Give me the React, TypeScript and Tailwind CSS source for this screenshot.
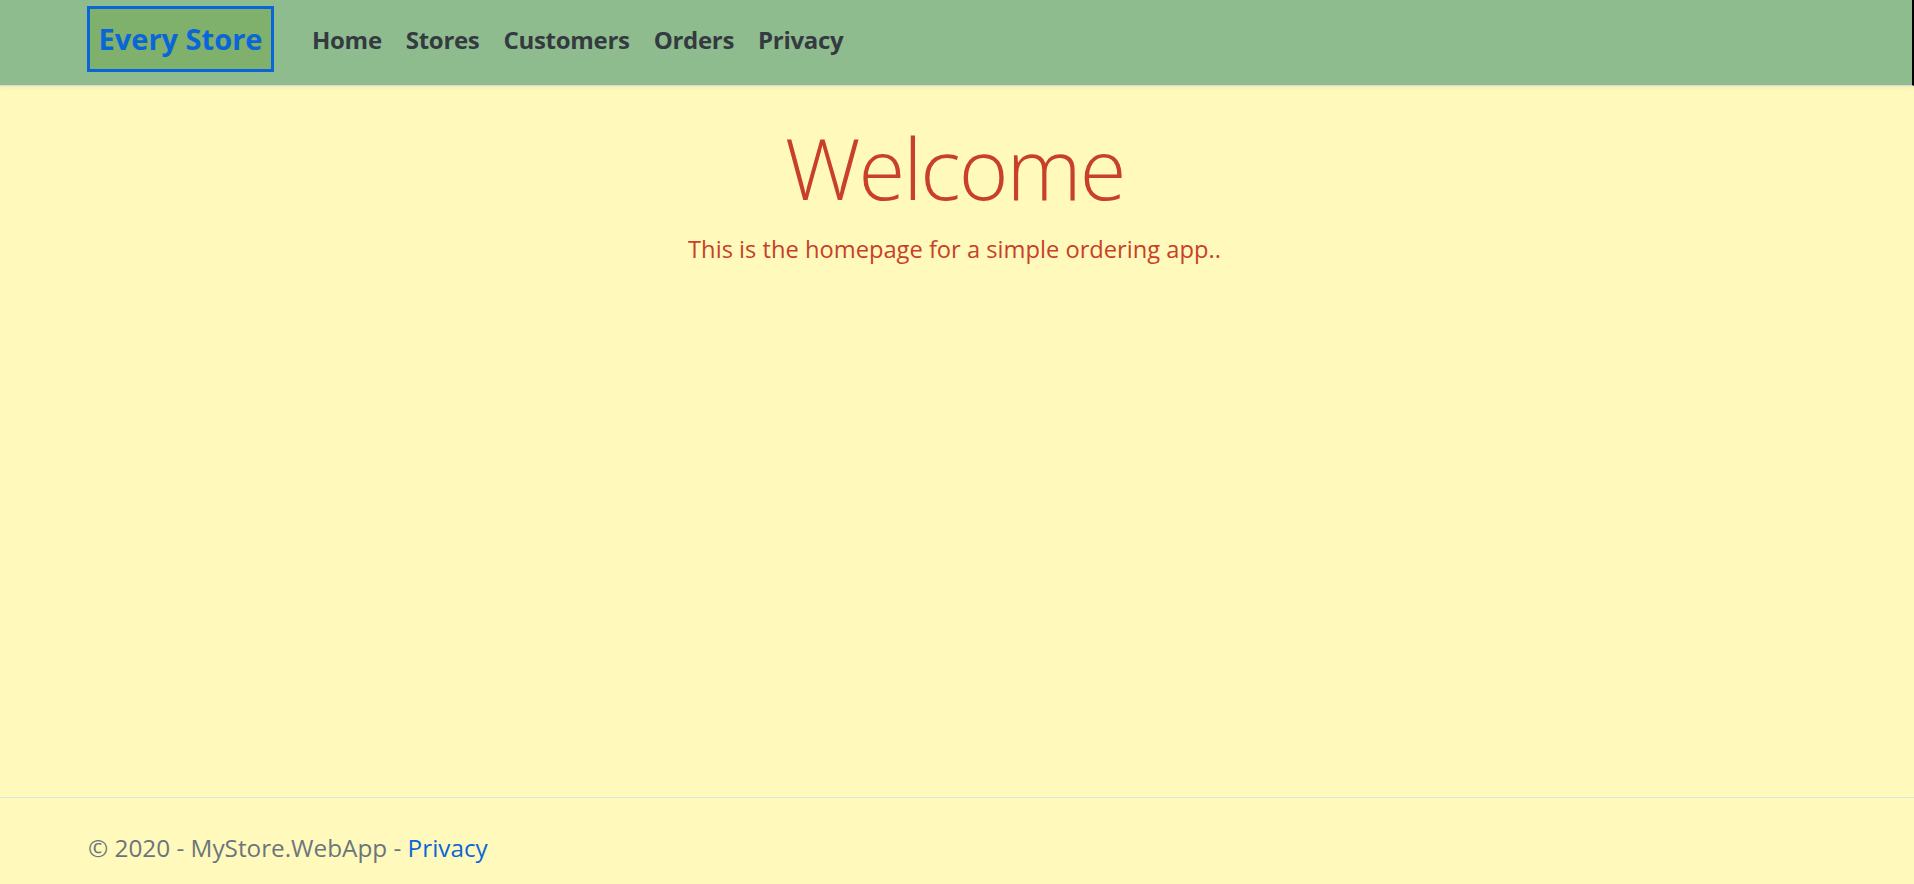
import React from "react";

export default function App() {
  return (
    <div className="flex h-[884px] flex-col overflow-hidden bg-[#fffabc] font-['Open_Sans','Noto_Sans',sans-serif]">
      <header className="relative z-10 flex h-[86px] shrink-0 items-center border-b border-[#d6dbd0] border-r-2 border-r-black bg-[#8fbc8f] pb-[8px] pl-[87px] shadow-[0_2px_4px_rgba(0,0,0,0.06)]">
        <a className="flex h-[66px] w-[187px] items-center justify-center border-[3px] border-[#0a66d8] bg-[#7fb06c] text-[29px] font-bold text-[#0a66d8]">
          Every Store
        </a>
        <nav className="ml-[26px] mt-[3px] flex items-center">
          {["Home", "Stores", "Customers", "Orders", "Privacy"].map((l) => (
            <a
              key={l}
              className="px-[12px] text-[24px] font-bold tracking-[-0.3px] text-[#343a40]"
            >
              {l}
            </a>
          ))}
        </nav>
      </header>
      <main className="flex-1 pr-[5px] text-center text-[#c9402a]">
        <h1 className="mt-[21px] text-[85px] font-light leading-[120px] tracking-[-2px]">
          Welcome
        </h1>
        <p className="mt-[6px] text-[23.7px] leading-[32px]">
          This is the homepage for a simple ordering app..
        </p>
      </main>
      <footer className="flex h-[87px] shrink-0 items-center border-t border-[#dee2e6] pl-[88px] pt-[14px] text-[24.3px] text-[#6c757d]">
        <span>
          © 2020 - MyStore.WebApp - <a className="text-[#0a66d8]">Privacy</a>
        </span>
      </footer>
    </div>
  );
}
